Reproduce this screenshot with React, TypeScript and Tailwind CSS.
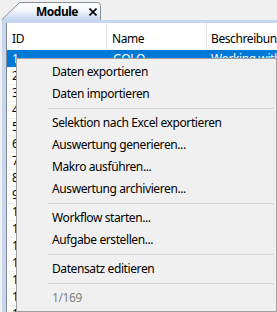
import React from "react";

const FONT = { fontFamily: '"Noto Sans", "Open Sans", sans-serif' };

type Item = { kind: "item"; label: string; muted?: boolean } | { kind: "sep" };

const items: Item[] = [
  { kind: "item", label: "Daten exportieren" },
  { kind: "item", label: "Daten importieren" },
  { kind: "sep" },
  { kind: "item", label: "Selektion nach Excel exportieren" },
  { kind: "item", label: "Auswertung generieren..." },
  { kind: "item", label: "Makro ausführen..." },
  { kind: "item", label: "Auswertung archivieren..." },
  { kind: "sep" },
  { kind: "item", label: "Workflow starten..." },
  { kind: "item", label: "Aufgabe erstellen..." },
  { kind: "sep" },
  { kind: "item", label: "Datensatz editieren" },
  { kind: "sep" },
  { kind: "item", label: "1/169", muted: true },
];

const rows = Array.from({ length: 16 }, (_, i) => i + 1);

export default function App() {
  return (
    <div
      className="relative w-[277px] h-[312px] overflow-hidden bg-[#f0f0f0] text-[12px] tracking-[-0.4px] text-black flex flex-col"
      style={FONT}
    >
      {/* Tab strip */}
      <div className="h-[20px] flex items-end shrink-0">
        <div className="relative w-[101px] h-[20px]">
          <svg className="absolute inset-0" width="101" height="20" viewBox="0 0 101 20">
            <defs>
              <linearGradient id="tabg" x1="0" y1="0" x2="0" y2="1">
                <stop offset="0" stopColor="#ffffff" />
                <stop offset="0.45" stopColor="#f2f6fc" />
                <stop offset="1" stopColor="#c6d6ee" />
              </linearGradient>
            </defs>
            <path d="M1.5 20 L19.5 2.5 L97.5 2.5 Q100.5 2.5 100.5 5.5 L100.5 20 Z" fill="url(#tabg)" />
            <path d="M1.5 20 L19.5 2.5 L97.5 2.5 Q100.5 2.5 100.5 5.5 L100.5 20" fill="none" stroke="#8c8f96" strokeWidth="1" />
          </svg>
          <div className="absolute left-[36px] top-[3px] h-[17px] flex items-center font-bold text-[12px] tracking-[-0.5px]">Module</div>
          <svg className="absolute left-[89px] top-[8px]" width="8" height="8" viewBox="0 0 8 8">
            <path d="M0.5 0.5 L7.5 7.5 M7.5 0.5 L0.5 7.5" stroke="#000" strokeWidth="1.6" />
          </svg>
        </div>
      </div>

      {/* Frame */}
      <div className="flex-1 pl-[2px] flex">
        <div className="flex-1 bg-[#c6d6ee] pt-[3px] pl-[4px] flex">
          <div className="flex-1 bg-white border-l border-[#828790] flex flex-col">
            {/* header */}
            <div className="h-[27px] flex shrink-0">
              <div className="w-[100px] pl-[5px] pt-[4px] flex items-center border-r border-[#e5e5e5]">ID</div>
              <div className="w-[100px] pl-[5px] pt-[4px] flex items-center border-r border-[#e5e5e5]">Name</div>
              <div className="flex-1 pl-[4px] pt-[4px] flex items-center whitespace-nowrap overflow-hidden">Beschreibung</div>
            </div>
            {rows.map((r) => (
              <div
                key={r}
                className={
                  r === 1
                    ? "h-[17px] flex shrink-0 bg-[#0078d7] text-white"
                    : "h-[17px] flex shrink-0 border-t border-[#f0f0f0]"
                }
              >
                <div className="w-[100px] pl-[5px] flex items-center">{r}</div>
                <div className="w-[100px] pl-[6px] flex items-center">{r === 1 ? "GOLO" : ""}</div>
                <div className="flex-1 pl-[4px] flex items-center whitespace-nowrap overflow-hidden">
                  {r === 1 ? "Working with" : ""}
                </div>
              </div>
            ))}
          </div>
        </div>
      </div>

      {/* Context menu */}
      <div className="absolute left-[16px] top-[58px] w-[261px] h-[254px] bg-[#f0f0f0] border border-[#a0a0a0] pt-[2px] flex flex-col">
        {items.map((it, i) =>
          it.kind === "sep" ? (
            <div key={i} className="h-[7px] flex items-center shrink-0">
              <div className="h-px flex-1 ml-[31px] mr-[2px] bg-[#d7d7d7]" />
            </div>
          ) : (
            <div
              key={i}
              className={
                it.muted
                  ? "h-[22px] flex items-center pl-[35px] shrink-0 text-[#808080]"
                  : "h-[22px] flex items-center pl-[35px] shrink-0 text-black"
              }
            >
              {it.label}
            </div>
          )
        )}
      </div>
    </div>
  );
}
